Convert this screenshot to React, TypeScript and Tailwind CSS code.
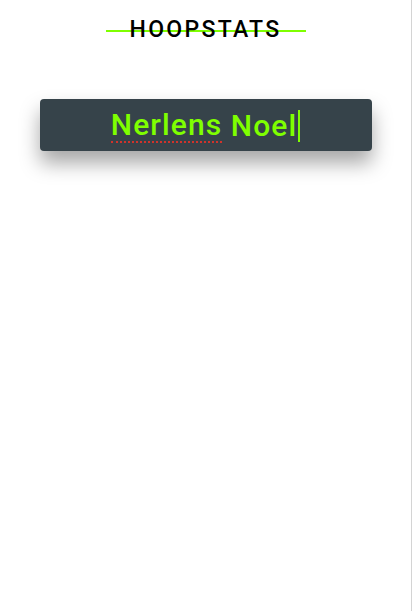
export default function App() {
  return (
    <div className="flex min-h-[611px] w-[413px] bg-white">
      <div className="flex-1 flex flex-col items-center">
        {/* Title with strike line */}
        <div className="relative mt-[16px] w-[200px] flex justify-center">
          <div className="absolute left-0 right-0 top-[14px] h-[2px] bg-[#7fff00]" />
          <h1 className="relative text-[23px] leading-[28px] font-medium tracking-[2.3px] text-black font-['Roboto',sans-serif]">
            HOOPSTATS
          </h1>
        </div>

        {/* Search box */}
        <div className="mt-[55px] w-[332px] h-[52px] rounded-[4px] bg-[#36434a] shadow-[0_12px_20px_rgba(0,0,0,0.35)] flex items-center justify-center pt-[2px]">
          <span className="text-[30px] font-medium leading-none text-[#7fff00] font-['Roboto',sans-serif] tracking-[1.1px] flex items-center">
            <span className="border-b-2 border-dotted border-[#d0332b] pb-[1px]">Nerlens</span>
            <span>&nbsp;Noel</span>
            <span className="ml-[1px] w-[2px] h-[32px] bg-[#7fff00]" />
          </span>
        </div>
      </div>
      <div className="w-[1px] bg-[#d4d4d4]" />
      <div className="w-[1px] bg-white" />
    </div>
  );
}
